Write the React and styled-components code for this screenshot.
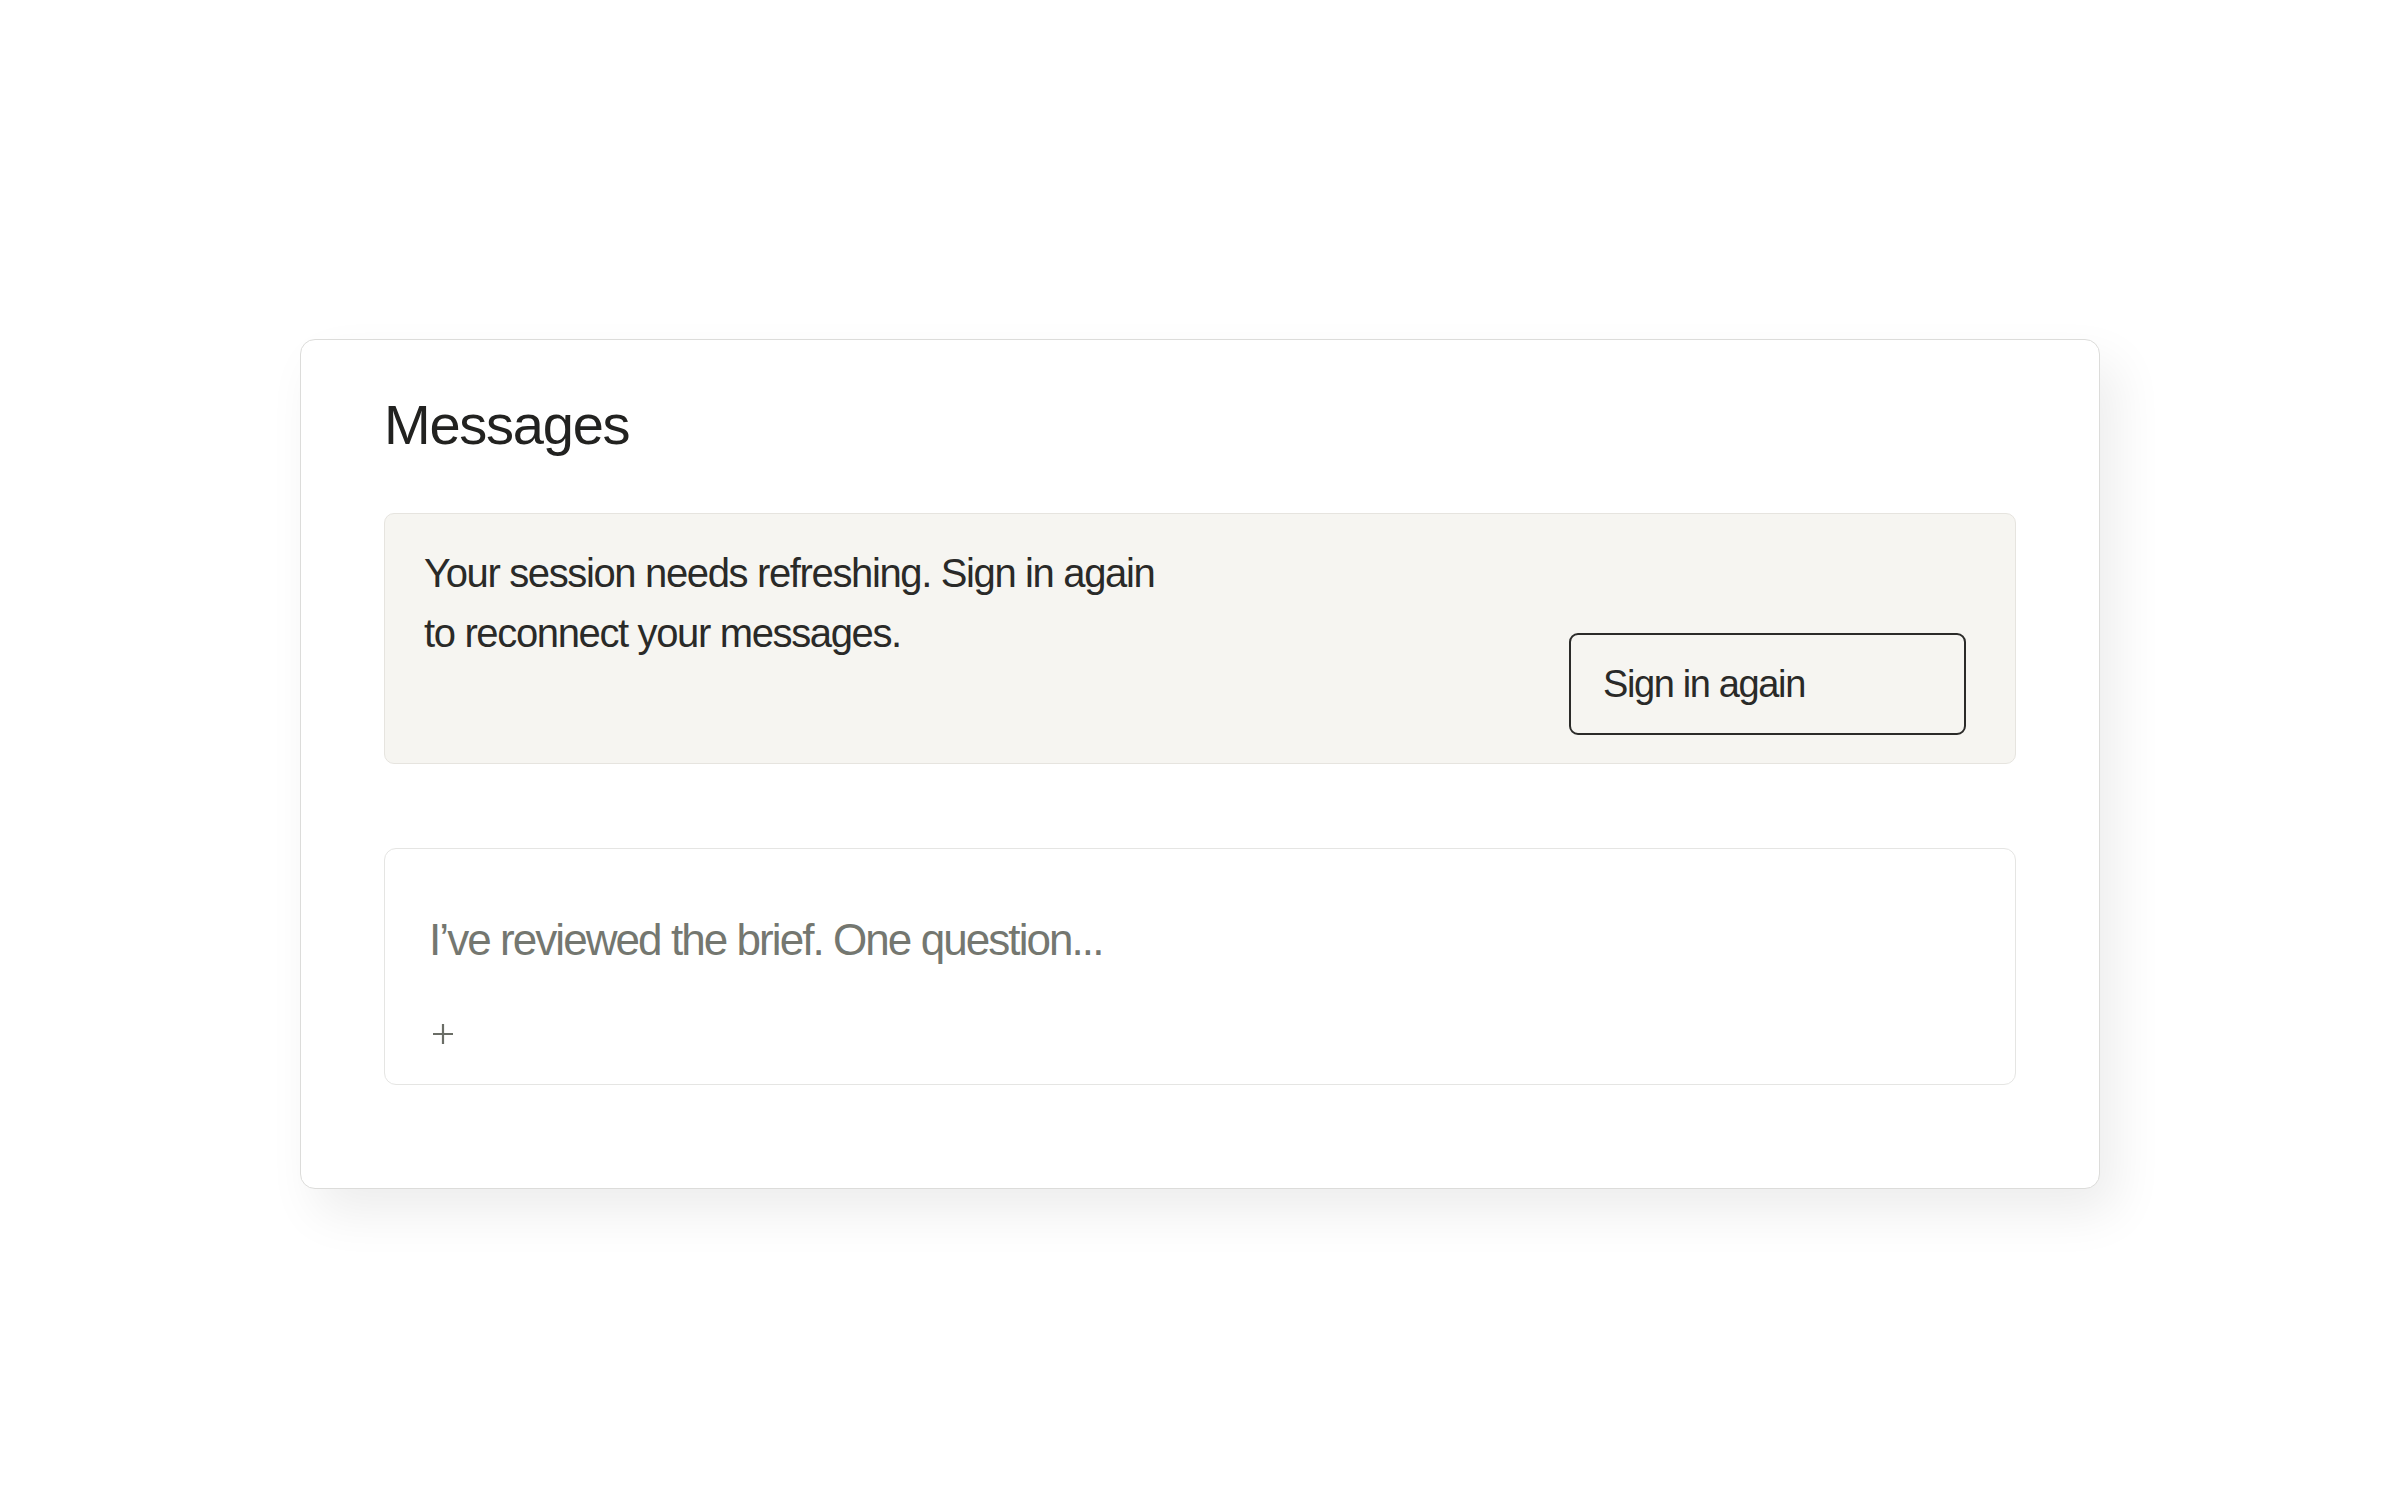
import React from 'react';
import styled, { createGlobalStyle } from 'styled-components';

const GlobalStyle = createGlobalStyle`
  html, body {
    margin: 0;
    padding: 0;
    background: #ffffff;
  }
  body {
    font-family: 'Liberation Sans', Arial, sans-serif;
    color: #252523;
  }
  * {
    box-sizing: border-box;
  }
`;

const Page = styled.main`
  min-height: 1500px;
  padding-top: 339px;
`;

const Card = styled.section`
  width: 1800px;
  margin: 0 auto;
  padding: 51px 83px 103px;
  background: #ffffff;
  border: 1px solid #dcdcda;
  border-radius: 15px;
  box-shadow: 16px 24px 50px rgba(0, 0, 0, 0.075);
`;

const Title = styled.h1`
  margin: 0 0 55px;
  font-size: 56px;
  line-height: 67px;
  font-weight: 400;
  letter-spacing: -0.022em;
  color: #222220;
`;

const Notice = styled.div`
  display: flex;
  justify-content: space-between;
  align-items: flex-end;
  min-height: 251px;
  padding: 29px 49px 28px 39px;
  background: #f6f5f1;
  border: 1px solid #e6e4df;
  border-radius: 10px;
`;

const NoticeText = styled.p`
  align-self: flex-start;
  margin: 0;
  max-width: 770px;
  font-size: 40px;
  line-height: 60px;
  letter-spacing: -0.034em;
  color: #2a2a28;
`;

const OutlineButton = styled.button`
  width: 397px;
  height: 102px;
  padding: 0 0 0 32px;
  background: transparent;
  border: 2px solid #2b2b29;
  border-radius: 9px;
  font-family: inherit;
  font-size: 38px;
  letter-spacing: -0.036em;
  color: #2a2a28;
  text-align: left;
  cursor: pointer;
`;

const Composer = styled.div`
  margin-top: 84px;
  padding: 58px 44px 39px;
  background: #ffffff;
  border: 1px solid #e5e5e3;
  border-radius: 12px;
`;

const Input = styled.textarea`
  display: block;
  width: 100%;
  height: 66px;
  margin: 0;
  padding: 0;
  border: 0;
  outline: none;
  resize: none;
  overflow: hidden;
  background: transparent;
  font-family: 'Liberation Sans', Arial, sans-serif;
  font-size: 44px;
  line-height: 66px;
  letter-spacing: -0.044em;
  color: #2a2a28;

  &::placeholder {
    color: #747770;
    opacity: 1;
  }
`;

const Toolbar = styled.div`
  display: flex;
  align-items: center;
  margin-top: 50px;
  padding-left: 3px;
`;

const IconButton = styled.button`
  display: flex;
  width: 22px;
  height: 22px;
  padding: 0;
  border: 0;
  background: none;
  color: #6a6d66;
  cursor: pointer;
`;

function PlusIcon() {
  return (
    <svg width="22" height="22" viewBox="0 0 22 22" fill="none">
      <path d="M11 1v20M1 11h20" stroke="currentColor" strokeWidth="2.2" />
    </svg>
  );
}

export default function App() {
  return (
    <>
      <GlobalStyle />
      <Page>
        <Card>
          <Title>Messages</Title>
          <Notice>
            <NoticeText>
              Your session needs refreshing. Sign in again to reconnect your
              messages.
            </NoticeText>
            <OutlineButton type="button">Sign in again</OutlineButton>
          </Notice>
          <Composer>
            <Input
              rows={1}
              placeholder="I’ve reviewed the brief. One question..."
            />
            <Toolbar>
              <IconButton type="button" aria-label="Add attachment">
                <PlusIcon />
              </IconButton>
            </Toolbar>
          </Composer>
        </Card>
      </Page>
    </>
  );
}
